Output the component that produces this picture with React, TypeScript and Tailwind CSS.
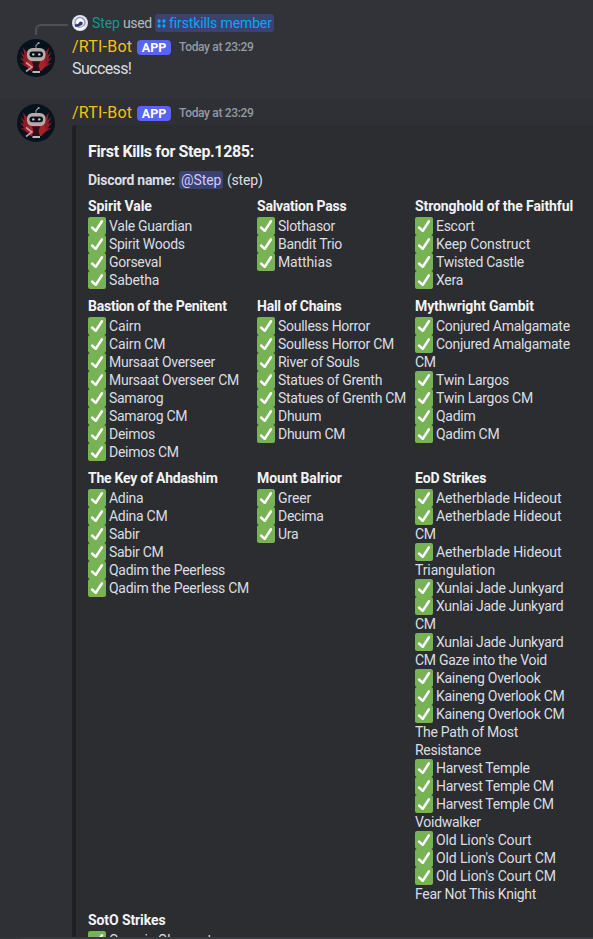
import React from "react";

type Field = { name: string; lines: string[] };

/* A leading "+" marks a line that carries the check mark. */
const rows: Field[][] = [
  [
    { name: "Spirit Vale", lines: ["+Vale Guardian", "+Spirit Woods", "+Gorseval", "+Sabetha"] },
    { name: "Salvation Pass", lines: ["+Slothasor", "+Bandit Trio", "+Matthias"] },
    { name: "Stronghold of the Faithful", lines: ["+Escort", "+Keep Construct", "+Twisted Castle", "+Xera"] },
  ],
  [
    {
      name: "Bastion of the Penitent",
      lines: ["+Cairn", "+Cairn CM", "+Mursaat Overseer", "+Mursaat Overseer CM", "+Samarog", "+Samarog CM", "+Deimos", "+Deimos CM"],
    },
    {
      name: "Hall of Chains",
      lines: ["+Soulless Horror", "+Soulless Horror CM", "+River of Souls", "+Statues of Grenth", "+Statues of Grenth CM", "+Dhuum", "+Dhuum CM"],
    },
    {
      name: "Mythwright Gambit",
      lines: ["+Conjured Amalgamate", "+Conjured Amalgamate", "CM", "+Twin Largos", "+Twin Largos CM", "+Qadim", "+Qadim CM"],
    },
  ],
  [
    { name: "The Key of Ahdashim", lines: ["+Adina", "+Adina CM", "+Sabir", "+Sabir CM", "+Qadim the Peerless", "+Qadim the Peerless CM"] },
    { name: "Mount Balrior", lines: ["+Greer", "+Decima", "+Ura"] },
    {
      name: "EoD Strikes",
      lines: [
        "+Aetherblade Hideout",
        "+Aetherblade Hideout",
        "CM",
        "+Aetherblade Hideout",
        "Triangulation",
        "+Xunlai Jade Junkyard",
        "+Xunlai Jade Junkyard",
        "CM",
        "+Xunlai Jade Junkyard",
        "CM Gaze into the Void",
        "+Kaineng Overlook",
        "+Kaineng Overlook CM",
        "+Kaineng Overlook CM",
        "The Path of Most",
        "Resistance",
        "+Harvest Temple",
        "+Harvest Temple CM",
        "+Harvest Temple CM",
        "Voidwalker",
        "+Old Lion's Court",
        "+Old Lion's Court CM",
        "+Old Lion's Court CM",
        "Fear Not This Knight",
      ],
    },
  ],
  [{ name: "SotO Strikes", lines: ["+Cosmic Observatory"] }],
];

/* Letter spacing: tight by default, looser for a few names and headings. */
function lineTracking(text: string) {
  if (/^(Aetherblade|Old Lion|Keep|Cairn|Matthias|Greer|Sabetha|Triang)/.test(text)) return "tracking-[-0.12px]";
  return "tracking-[-0.28px]";
}

function nameTracking(name: string) {
  if (/^(Bastion|Hall|The Key|Salvation)/.test(name)) return "tracking-[-0.24px]";
  return "tracking-[-0.1px]";
}

function Check() {
  return (
    <svg viewBox="0 0 36 36" className="mr-[3px] size-[18px] shrink-0">
      <rect width="36" height="36" rx="4" fill="#77b255" />
      <path
        fill="#fff"
        d="M29.28 6.362a2.502 2.502 0 0 0-3.458.736L14.936 23.877l-5.029-4.65a2.5 2.5 0 1 0-3.394 3.671l7.209 6.666c.48.445 1.09.665 1.696.665.673 0 1.534-.282 2.099-1.139.332-.506 12.5-19.27 12.5-19.27a2.5 2.5 0 0 0-.737-3.458z"
      />
    </svg>
  );
}

function FieldBlock({ field }: { field: Field }) {
  return (
    <div className="whitespace-nowrap text-[14px] leading-[18px]">
      <div className={`mb-0.5 font-bold text-[#f2f3f5] ${nameTracking(field.name)}`}>{field.name}</div>
      {field.lines.map((line, i) => (
        <div key={i} className="flex h-[18px] items-center">
          {line.startsWith("+") && <Check />}
          <span className={lineTracking(line.replace("+", ""))}>{line.replace("+", "")}</span>
        </div>
      ))}
    </div>
  );
}

function BotAvatar() {
  return (
    <svg viewBox="0 0 38 38" className="ml-[17px] size-[38px] shrink-0">
      <circle cx="19" cy="19" r="19" fill="#06121c" />
      <g fill="#8e1c25">
        <path d="M14 31 3.500 24l4 .5L2.800 18l4 2L3.500 12.500l4 4L6 8.500l5 6 3 8z" />
        <path d="M24 31l10.500-7-4 .5 4.700-6.500-4 2 3.300-7.500-4 4L32 8.500l-5 6-3 8z" />
      </g>
      <path d="M11 21h16l2 5-4.500 6h-11L9 26z" fill="#a92029" />
      <path d="M15 22.500h8l-1.500 4.500 1.500 5h-8l1.500-5z" fill="#2a1018" />
      <path d="M19 9.500V6.500l2.500-2.500" stroke="#8b9199" strokeWidth="1.100" fill="none" />
      <circle cx="21.700" cy="3.900" r="1" fill="#a6a9ae" />
      <rect x="10" y="9" width="18.500" height="13" rx="5.500" fill="#b5abad" />
      <rect x="12.500" y="12.500" width="13.500" height="5.800" rx="2.800" fill="#0a1018" />
      <circle cx="16.300" cy="15.400" r="1.200" fill="#c3cad1" />
      <circle cx="22.300" cy="15.400" r="1.200" fill="#c3cad1" />
      <path d="m9 23.500 6 4.500-6 4.500" stroke="#c59a9f" strokeWidth="1.600" fill="none" />
      <path d="M15.500 33h7.500" stroke="#ded9da" strokeWidth="1.700" />
    </svg>
  );
}

function Header() {
  return (
    <div className="flex h-[22px] items-center whitespace-nowrap">
      <span className="w-[61px] text-[16px] leading-[22px] tracking-[0.22px] text-[#f1c40f]">/RTI-Bot</span>
      <span className="ml-1 flex h-[15px] w-[34px] items-center justify-center rounded-[4px] bg-[#5865f2] text-[12.5px] font-bold leading-[15px] text-white">
        APP
      </span>
      <span className="ml-2 text-[12px] font-medium leading-[22px] tracking-[-0.34px] text-[#949ba4]">Today at 23:29</span>
    </div>
  );
}

export default function App() {
  return (
    <div className="flex h-[939px] w-[593px] flex-col overflow-hidden bg-[#313338] font-['Roboto','Noto_Sans',sans-serif] text-[#dbdee1]">
      <div className="h-[99px] shrink-0 pt-[14px]">
        <div className="flex h-[18px] items-center whitespace-nowrap text-[14px] leading-[18px]">
          <div className="ml-[35px] mt-[13px] h-[11px] w-[33px] rounded-tl-[6px] border-l-2 border-t-2 border-[#4e5058]" />
          <svg viewBox="0 0 16 16" className="ml-1 size-4">
            <circle cx="8" cy="8" r="8" fill="#e2e5f2" />
            <circle cx="8" cy="7.500" r="5" fill="none" stroke="#9298bd" strokeWidth="1.300" />
            <circle cx="7.500" cy="6.500" r="3" fill="#fff" />
            <path d="M2.500 9.500 6 9l2-2.500 2.500.5v2.500L7 11.500l-3.500.5z" fill="#343766" />
            <path d="M4 13c3 1.500 6 1 8.500-1.500" stroke="#fff" strokeWidth="1.600" fill="none" />
          </svg>
          <span className="ml-1 w-[27px] tracking-[-0.1px] text-[#1a968c]">Step</span>
          <span className="ml-1 w-7 tracking-[-0.4px] text-[#b5bac1]">used</span>
          <span className="ml-1 flex h-[18px] w-[119px] items-center rounded-[3px] bg-[#3c4270] tracking-[-0.12px] text-[#00a8fc]">
            <svg viewBox="0 0 10 10" className="ml-0.5 mr-[3px] size-[9px] shrink-0" fill="#00a8fc">
              <circle cx="2.300" cy="2.300" r="1.900" />
              <circle cx="7.700" cy="2.300" r="1.900" />
              <circle cx="2.300" cy="7.700" r="1.900" />
              <circle cx="7.700" cy="7.700" r="1.900" />
              <path d="M2.300 1.500v7M7.700 1.500v7" stroke="#00a8fc" strokeWidth="0.600" />
            </svg>
            firstkills member
          </span>
        </div>
        <div className="mt-1 flex">
          <div className="flex w-[72px] shrink-0 pt-[3px]">
            <BotAvatar />
          </div>
          <div>
            <Header />
            <div className="text-[16px] leading-[22px] tracking-[-0.6px]">Success!</div>
          </div>
        </div>
      </div>
      <div className="flex h-[838px] shrink-0 overflow-hidden bg-[#2e3035] pt-[3px]">
        <div className="flex w-[72px] shrink-0 pt-[2px]">
          <BotAvatar />
        </div>
        <div className="w-[521px]">
          <Header />
          <div className="mt-px h-[840px] rounded-l-[4px] border-l-4 border-[#1e1f22] bg-[#2b2d31] pl-3 pt-4">
            <div className="h-[22px] text-[16px] font-bold leading-[22px] tracking-[-0.35px] text-[#f2f3f5]">First Kills for Step.1285:</div>
            <div className="mt-2 flex h-[18px] items-center gap-1 text-[14px] leading-[18px]">
              <span className="w-[87px] font-bold tracking-[-0.28px]">Discord name:</span>
              <span className="w-11 rounded-[3px] bg-[#3c4270] px-0.5 tracking-[-0.1px] text-[#c9cdfb]">@Step</span>
              <span className="tracking-[-0.2px]">(step)</span>
            </div>
            <div className="mt-2 flex flex-col gap-2">
              {rows.map((row, i) => (
                <div key={i} className="grid grid-cols-[169px_158px_1fr]">
                  {row.map((field) => (
                    <FieldBlock key={field.name} field={field} />
                  ))}
                </div>
              ))}
            </div>
          </div>
        </div>
      </div>
      <div className="ml-5 h-0.5 shrink-0 rounded-tl bg-[#38393f]" />
    </div>
  );
}
